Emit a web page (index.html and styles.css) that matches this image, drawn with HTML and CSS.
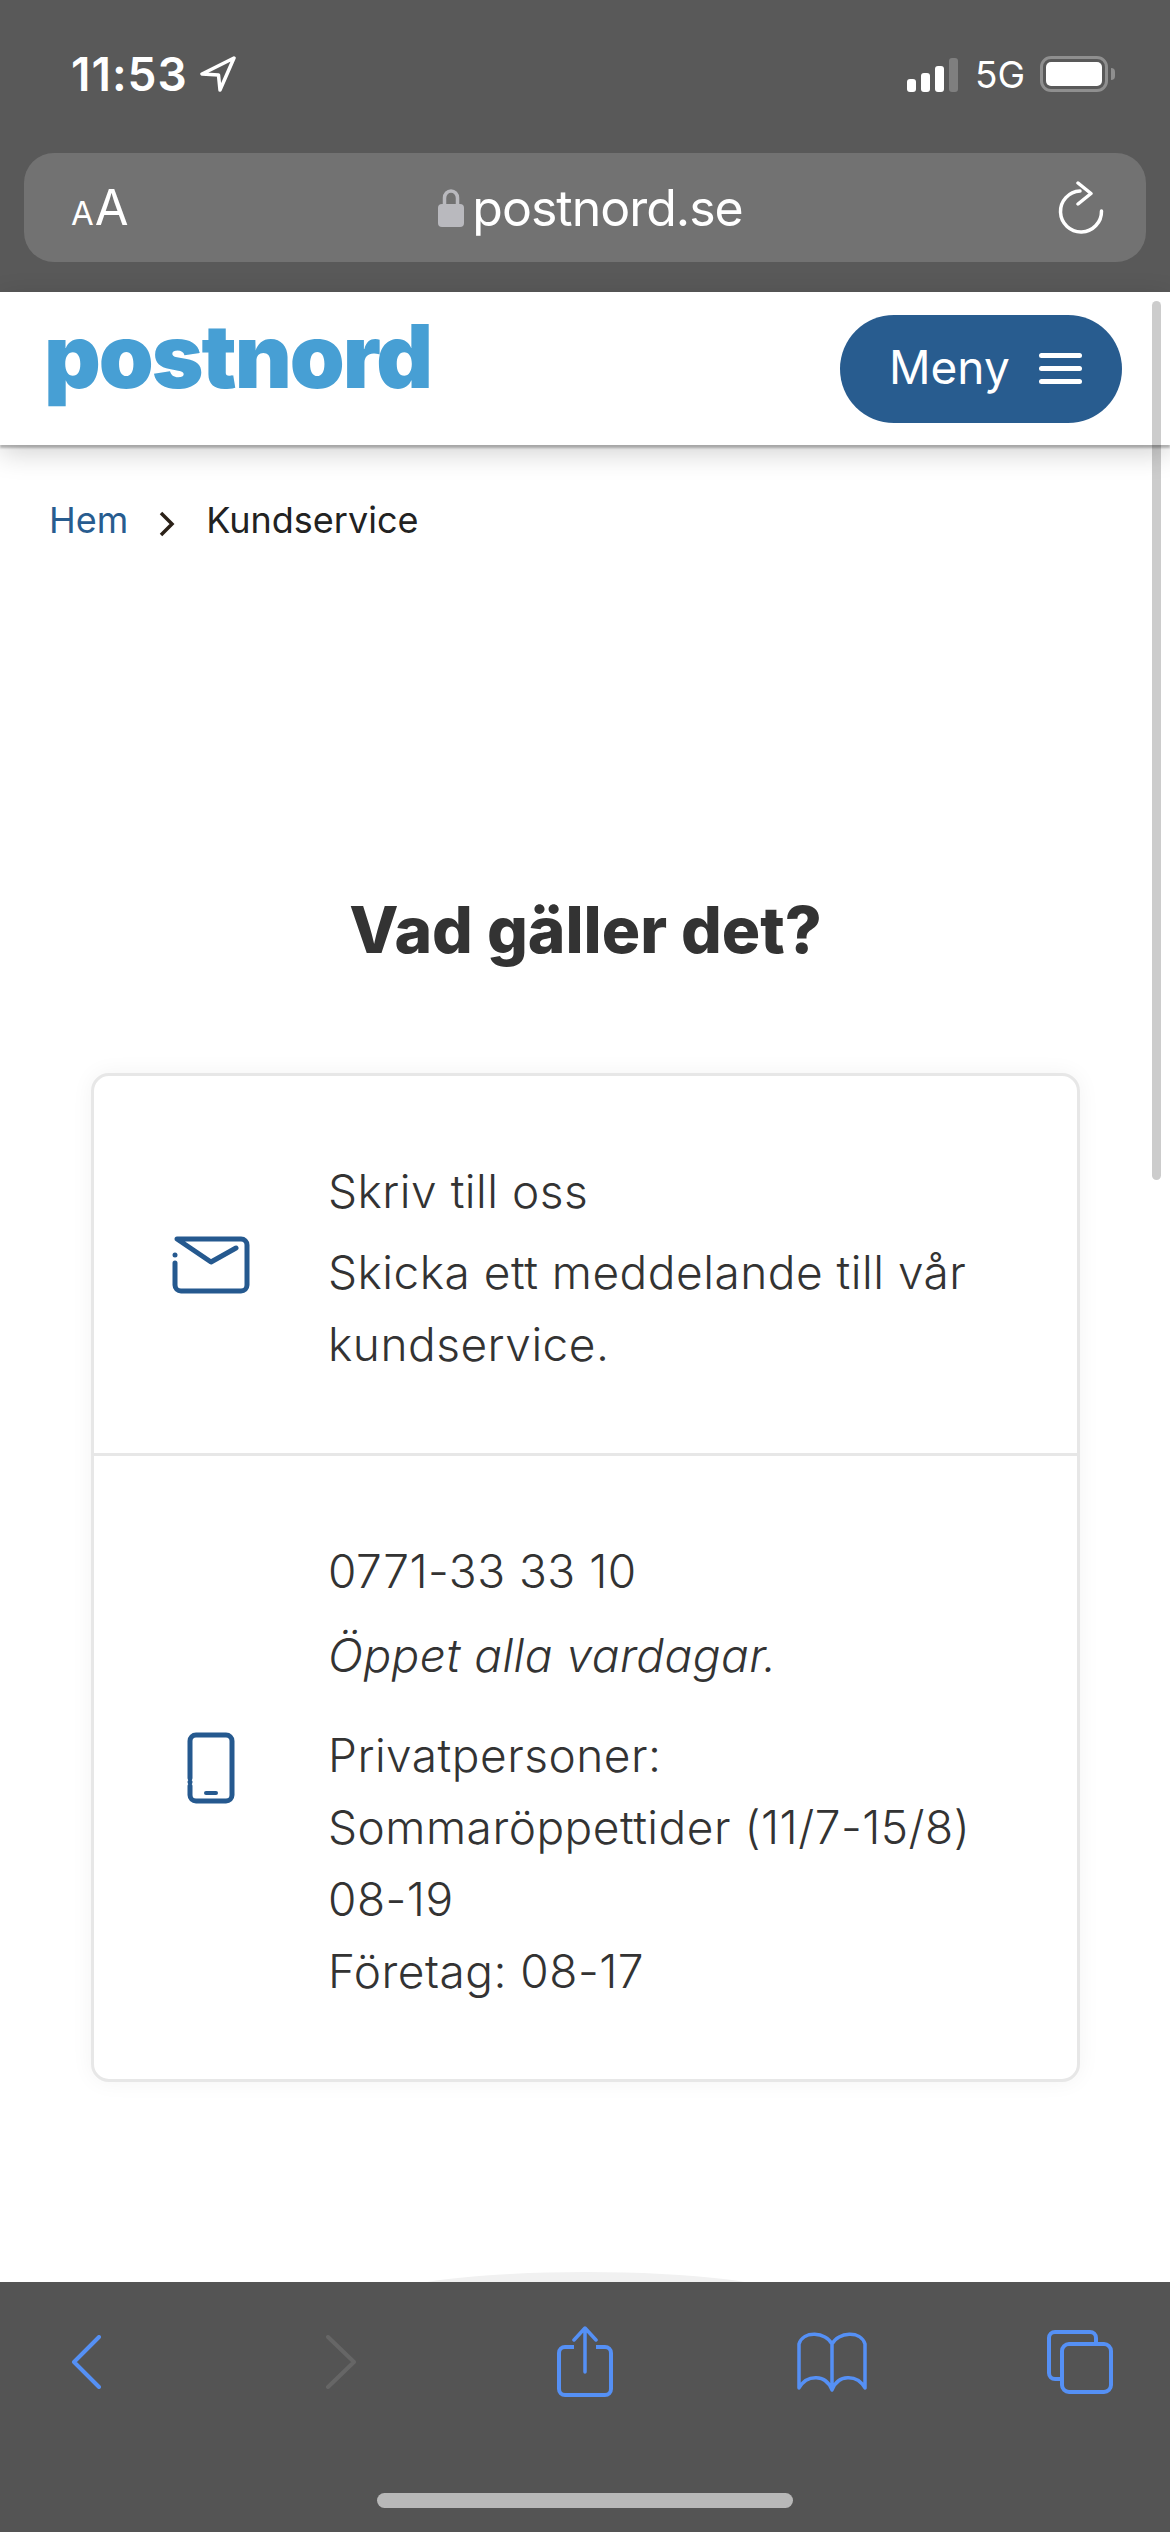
FILE: index.html
```html
<!DOCTYPE html>
<html lang="sv">
<head>
    <meta charset="UTF-8">
    <meta name="viewport" content="width=device-width, initial-scale=1.0">
    <title>Kundservice - PostNord</title>
    <link rel="stylesheet" href="styles.css">
</head>
<body>
    <div class="phone">
        <div class="browser-top">
            <div class="status-bar">
                <div class="status-left">
                    <span class="time">11:53</span>
                    <svg class="location" viewBox="0 0 37 36" width="37" height="36">
                        <path d="M34 2 L2 18 L18.500 19 L20 34 Z" fill="none" stroke="#fff" stroke-width="3.500" stroke-linejoin="round"/>
                    </svg>
                </div>
                <div class="status-right">
                    <div class="signal">
                        <span class="bar bar1"></span>
                        <span class="bar bar2"></span>
                        <span class="bar bar3"></span>
                        <span class="bar bar4"></span>
                    </div>
                    <span class="network">5G</span>
                    <div class="battery"><div class="battery-fill"></div></div>
                    <div class="battery-nub"></div>
                </div>
            </div>
            <div class="address-bar">
                <div class="text-size"><span class="small-a">A</span><span class="big-a">A</span></div>
                <div class="url">
                    <svg class="lock" viewBox="0 0 26 38" width="26" height="38">
                        <path d="M6.500 17 V9 a6.500 7 0 0 1 13 0 V17" fill="none" stroke="#b9b9be" stroke-width="3.500"/>
                        <rect x="0" y="15" width="26" height="23" rx="4" fill="#b9b9be"/>
                    </svg>
                    <span>postnord.se</span>
                </div>
                <svg class="reload" viewBox="0 0 46 54" width="46" height="54">
                    <path d="M22 10 A20.500 20.500 0 1 0 43.500 30" fill="none" stroke="#fff" stroke-width="3.500" stroke-linecap="round"/>
                    <path d="M20 2 L33 12.500 L20 23" fill="none" stroke="#fff" stroke-width="3.500" stroke-linecap="round" stroke-linejoin="round"/>
                </svg>
            </div>
        </div>

        <header class="site-header">
            <div class="logo">postnord</div>
            <button class="menu-btn">
                <span>Meny</span>
                <span class="burger"><i></i><i></i><i></i></span>
            </button>
        </header>
        <div class="scrollbar"></div>

        <main class="content">
            <nav class="breadcrumb">
                <a href="#">Hem</a>
                <svg class="crumb-arrow" viewBox="0 0 16 26" width="16" height="26">
                    <path d="M2 2 L13 13 L2 24" fill="none" stroke="#2b2118" stroke-width="3.500"/>
                </svg>
                <span>Kundservice</span>
            </nav>
            <h1>Vad gäller det?</h1>
            <section class="card">
                <div class="row row-message">
                    <div class="row-icon">
                        <svg viewBox="0 0 78 58" width="78" height="58">
                            <path d="M3 27 V49 a6 6 0 0 0 6 6 H69 a6 6 0 0 0 6 -6 V9 a6 6 0 0 0 -6 -6 H5 L39 26 L64 12" fill="none" stroke="#25598f" stroke-width="5" stroke-linecap="round" stroke-linejoin="round"/>
                            <circle cx="3" cy="19" r="2.500" fill="#25598f"/>
                        </svg>
                    </div>
                    <div class="row-text">
                        <p>Skriv till oss</p>
                        <p>Skicka ett meddelande till vår kundservice.</p>
                    </div>
                </div>
                <div class="row row-phone">
                    <div class="row-icon">
                        <svg viewBox="0 0 48 72" width="48" height="72">
                            <path d="M3 46 V9 a6 6 0 0 1 6 -6 H39 a6 6 0 0 1 6 6 V63 a6 6 0 0 1 -6 6 H9 a6 6 0 0 1 -6 -6 V54" fill="none" stroke="#25598f" stroke-width="5" stroke-linecap="round"/>
                            <circle cx="3" cy="50" r="2.500" fill="#25598f"/>
                            <path d="M19 61 H29" stroke="#25598f" stroke-width="4" stroke-linecap="round"/>
                        </svg>
                    </div>
                    <div class="row-text">
                        <p>0771-33 33 10</p>
                        <p class="opening"><em>Öppet alla vardagar.</em></p>
                        <p class="hours">Privatpersoner:<br>Sommaröppettider (11/7-15/8)<br>08-19<br>Företag: 08-17</p>
                    </div>
                </div>
            </section>
            <div class="next-curve"></div>
        </main>

        <footer class="toolbar">
            <div class="tool-icons">
                <svg viewBox="0 0 30 54" width="30" height="54">
                    <path d="M28 2 L3 27 L28 52" fill="none" stroke="#5590f5" stroke-width="4" stroke-linecap="round" stroke-linejoin="round"/>
                </svg>
                <svg viewBox="0 0 32 54" width="32" height="54">
                    <path d="M3 2 L29 27 L3 52" fill="none" stroke="#666" stroke-width="4" stroke-linecap="round" stroke-linejoin="round"/>
                </svg>
                <svg viewBox="0 0 56 72" width="56" height="72">
                    <path d="M17 21 H8 a6 6 0 0 0 -6 6 V63 a6 6 0 0 0 6 6 H48 a6 6 0 0 0 6 -6 V27 a6 6 0 0 0 -6 -6 H39" fill="none" stroke="#5590f5" stroke-width="4"/>
                    <path d="M28 46 V3 M17 14 L28 2 L39 14" fill="none" stroke="#5590f5" stroke-width="3.500" stroke-linecap="round" stroke-linejoin="round"/>
                </svg>
                <svg viewBox="0 0 70 60" width="70" height="60">
                    <path d="M35 12 C29 0 6 -2 2 12 V56 C10 42 29 42 35 58 C41 42 60 42 68 56 V12 C64 -2 41 0 35 12 Z M35 12 V58" fill="none" stroke="#5590f5" stroke-width="3.500" stroke-linejoin="round"/>
                </svg>
                <svg viewBox="0 0 68 66" width="68" height="66">
                    <path d="M50 13 V9 a6 6 0 0 0 -6 -6 H9 a6 6 0 0 0 -6 6 V44 a6 6 0 0 0 6 6 H14" fill="none" stroke="#5590f5" stroke-width="4"/>
                    <rect x="16" y="15" width="49" height="48" rx="7" fill="none" stroke="#5590f5" stroke-width="4"/>
                </svg>
            </div>
            <div class="home-indicator"></div>
        </footer>
    </div>
</body>
</html>
```

FILE: styles.css
```css
* {
    box-sizing: border-box;
}
html, body {
    margin: 0;
    padding: 0;
    background: #fff;
}
.phone {
    width: 1170px;
    height: 2532px;
    display: flex;
    flex-direction: column;
    overflow: hidden;
    position: relative;
    font-family: "Inter", "Liberation Sans", sans-serif;
}

/* safari chrome */
.browser-top {
    height: 292px;
    flex-shrink: 0;
    background: #595959;
    padding: 56px 24px 0;
    color: #fff;
}
.status-bar {
    height: 36px;
    display: flex;
    justify-content: space-between;
    align-items: center;
    padding: 0 0 0 47px;
}
.status-left {
    display: flex;
    align-items: center;
    gap: 12px;
}
.time {
    font-size: 46px;
    font-weight: 600;
    letter-spacing: 1px;
}
.status-right {
    display: flex;
    align-items: center;
    margin-right: 31px;
}
.signal {
    display: flex;
    align-items: flex-end;
    gap: 5px;
    height: 34px;
    margin-top: 2px;
}
.bar {
    width: 9px;
    background: #fff;
    border-radius: 3px;
}
.bar1 { height: 13px; }
.bar2 { height: 19px; }
.bar3 { height: 26px; }
.bar4 { height: 34px; background: #7f7f7f; }
.network {
    font-size: 37px;
    font-weight: 400;
    margin-left: 17px;
    width: 65px;
}
.battery {
    width: 68px;
    height: 36px;
    border: 3px solid #8f8f8f;
    border-radius: 11px;
    padding: 3px;
}
.battery-fill {
    height: 100%;
    background: #fff;
    border-radius: 5px;
}
.battery-nub {
    width: 4px;
    height: 12px;
    margin-left: 3px;
    background: #8f8f8f;
    border-radius: 0 4px 4px 0;
}
.address-bar {
    height: 109px;
    margin-top: 61px;
    background: #727272;
    border-radius: 30px;
    display: flex;
    align-items: center;
    justify-content: space-between;
    padding: 0 42px 0 47px;
}
.text-size {
    display: flex;
    align-items: baseline;
    gap: 1px;
    width: 60px;
}
.small-a { font-size: 33px; }
.big-a { font-size: 49px; }
.url {
    display: flex;
    align-items: center;
    gap: 8px;
    font-size: 50px;
    letter-spacing: -1px;
    margin-left: -8px;
}
.site-header {
    height: 153px;
    flex-shrink: 0;
    background: #fff;
    display: flex;
    justify-content: space-between;
    align-items: center;
    padding: 0 48px;
    box-shadow: 0 3px 2px rgba(0, 0, 0, 0.25), 0 8px 26px rgba(0, 0, 0, 0.18);
    position: relative;
    z-index: 2;
}
.logo {
    font-size: 88px;
    font-weight: 900;
    letter-spacing: -2px;
    color: #479fd4;
    line-height: 1;
    margin: -26px 0 0 -4px;
}
.menu-btn {
    width: 282px;
    height: 108px;
    background: #285c8f;
    color: #fff;
    border: none;
    border-radius: 54px;
    font-family: inherit;
    font-size: 46px;
    display: flex;
    align-items: center;
    justify-content: space-between;
    padding: 0 40px 0 49px;
}
.menu-btn span:first-child {
    margin-top: -3px;
}
.burger {
    display: flex;
    flex-direction: column;
    gap: 8px;
}
.burger i {
    display: block;
    width: 43px;
    height: 5px;
    background: #fff;
    border-radius: 3px;
}
.scrollbar {
    position: absolute;
    top: 301px;
    right: 9px;
    width: 9px;
    height: 879px;
    background: rgba(0, 0, 0, 0.2);
    border-radius: 5px;
    z-index: 3;
}

/* page content */
.content {
    flex: 1;
    background: #fff;
    position: relative;
    padding: 0 90px 0 91px;
    overflow: hidden;
}
.breadcrumb {
    display: flex;
    align-items: center;
    gap: 31px;
    margin: 53px 0 0 -42px;
    font-size: 36px;
    color: #222;
}
.breadcrumb a {
    color: #285c8f;
    text-decoration: none;
}
.crumb-arrow {
    margin-top: 8px;
}
h1 {
    margin: 348px 0 0;
    text-align: center;
    font-size: 64px;
    font-weight: 800;
    color: #333;
    line-height: 80px;
}
.card {
    margin-top: 103px;
    border: 3px solid #e7e7e7;
    border-radius: 18px;
    background: #fff;
    box-shadow: 0 0 22px rgba(0, 0, 0, 0.05);
}
.row {
    display: flex;
    align-items: center;
}
.row-message {
    height: 380px;
    border-bottom: 3px solid #e7e7e7;
}
.row-phone {
    height: 623px;
}
.row-icon {
    width: 234px;
    flex-shrink: 0;
    display: flex;
    justify-content: center;
}
.row-text {
    flex: 1;
    padding-right: 40px;
    font-size: 46px;
    font-weight: 350;
    letter-spacing: 0.5px;
    line-height: 72px;
    color: #333;
}
.row-text p {
    margin: 0 0 9px;
}
.row-text p:last-child {
    margin-bottom: 0;
}
.row-message .row-text {
    padding-top: 5px;
}
.row-phone .row-text {
    padding-top: 7px;
}
.row-phone p:first-child {
    margin-bottom: 12px;
}
.row-phone .opening {
    margin-bottom: 28px;
}
.next-curve {
    position: absolute;
    left: 388px;
    bottom: -40px;
    width: 396px;
    height: 50px;
    background: #f1f1f1;
    border-radius: 50%;
}

/* bottom toolbar */
.toolbar {
    height: 250px;
    flex-shrink: 0;
    background: #545454;
    padding-top: 44px;
    display: flex;
    flex-direction: column;
}
.tool-icons {
    height: 72px;
    display: grid;
    grid-template-columns: 254px 232px 240px 249px auto;
    align-items: center;
    justify-items: start;
    padding-left: 71px;
}
.home-indicator {
    width: 416px;
    height: 15px;
    margin: 95px auto 0;
    background: #b8b8b8;
    border-radius: 8px;
}
```
